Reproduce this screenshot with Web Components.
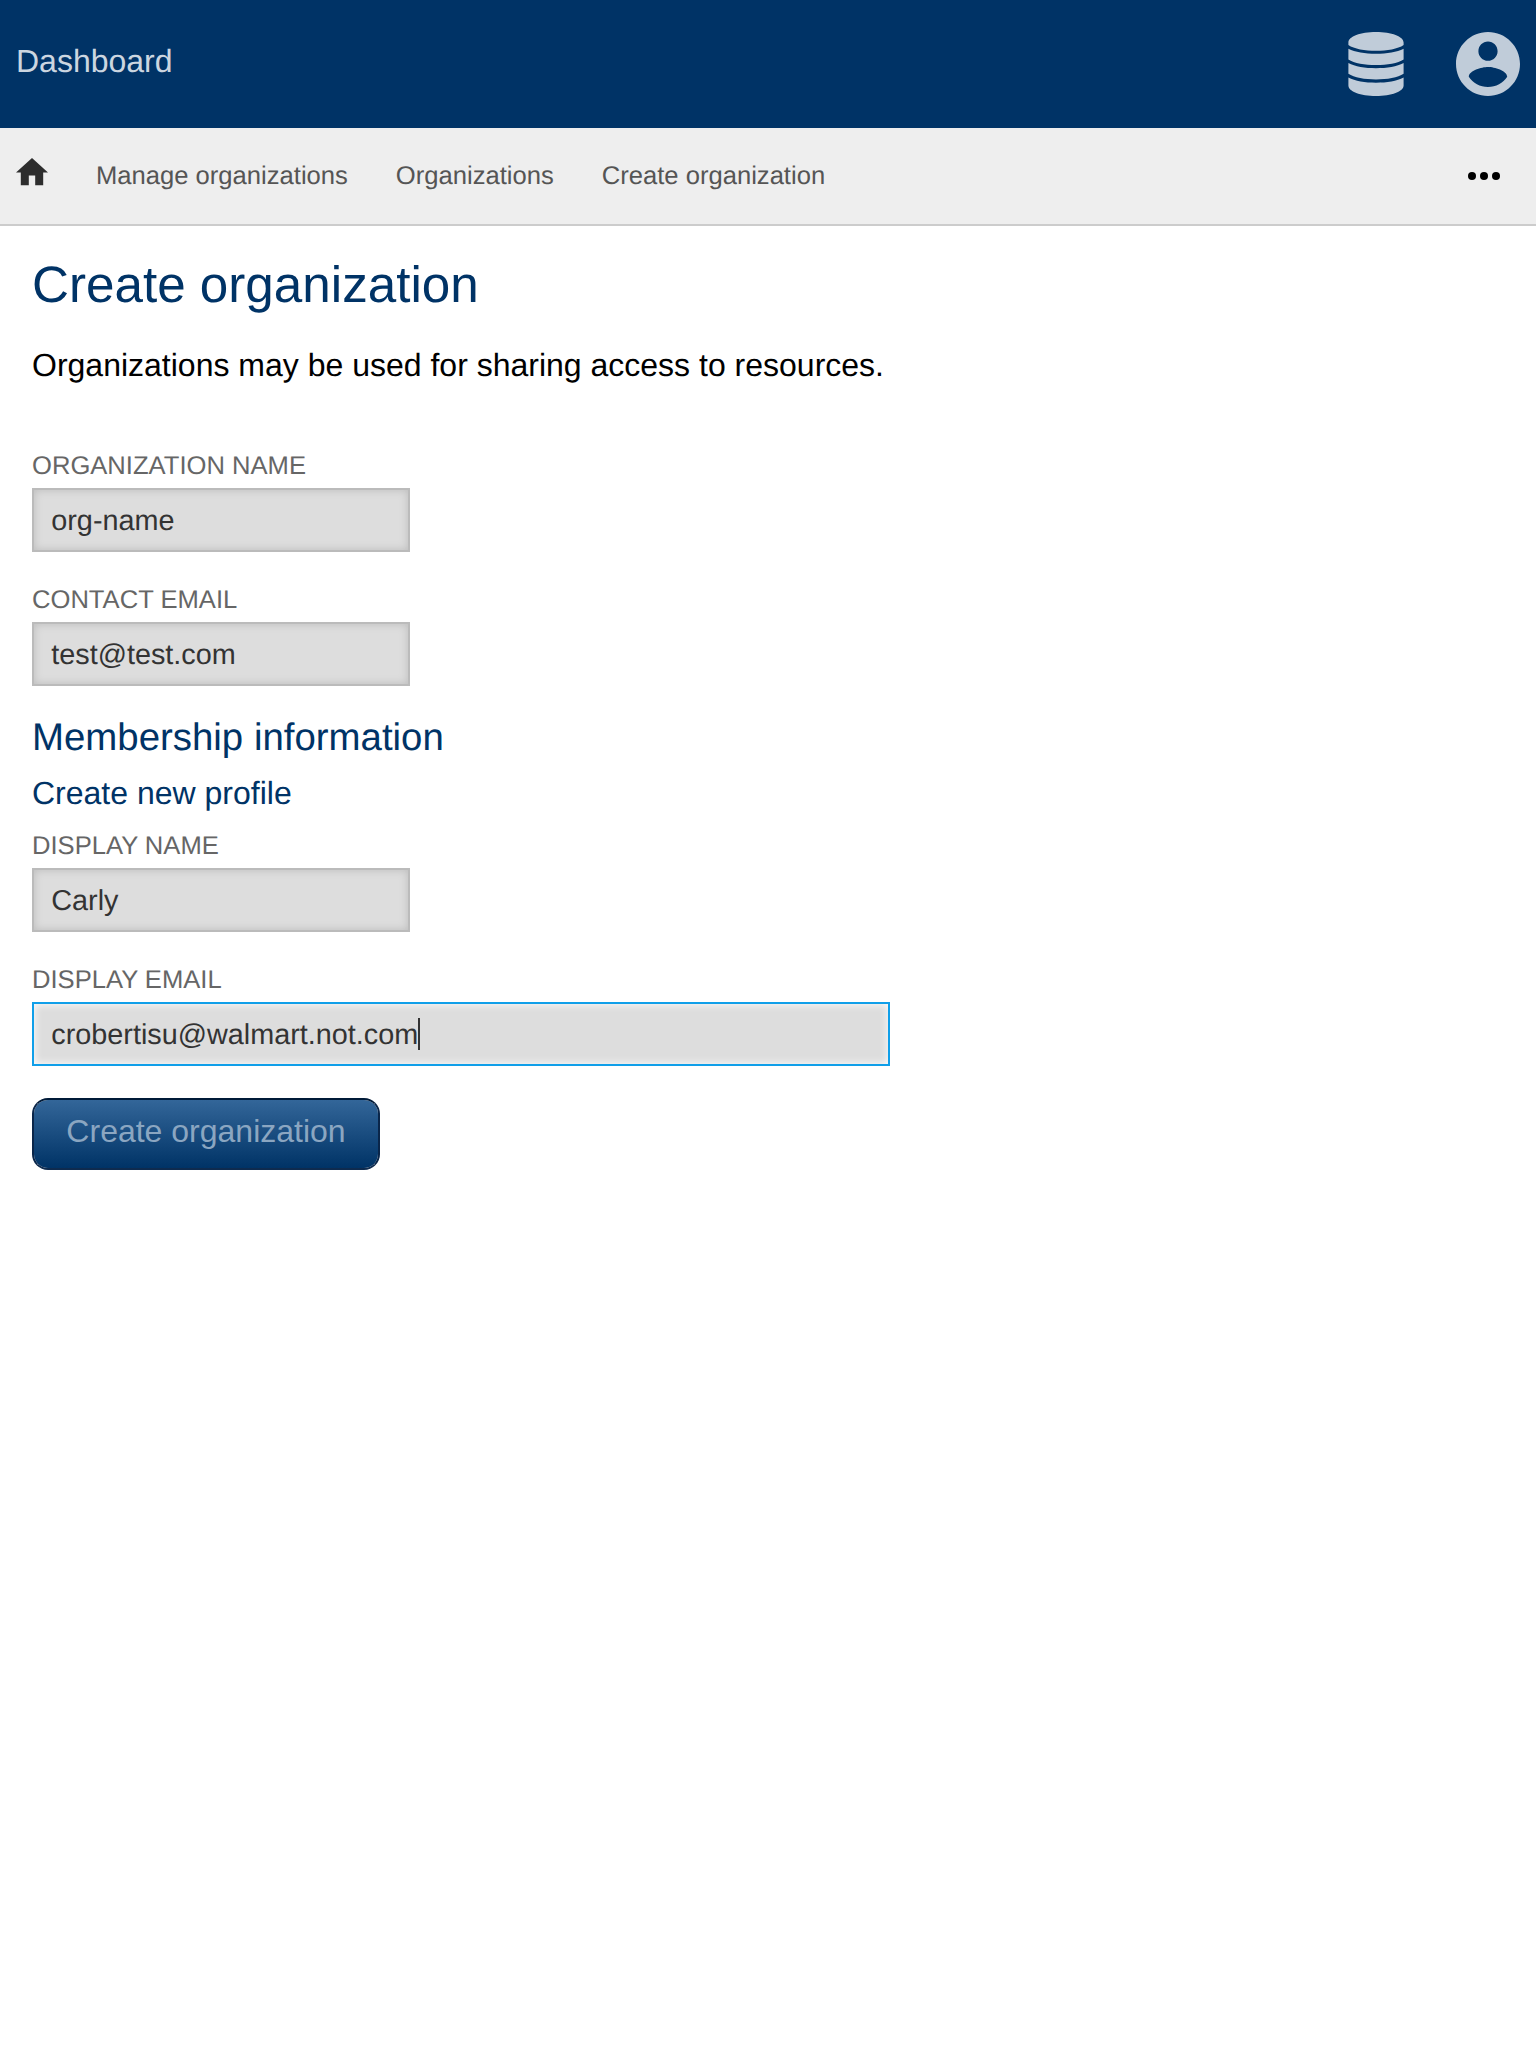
<!DOCTYPE html>
<html lang="en">
<head>
<meta charset="utf-8">
<title>Create organization</title>
<style>
html, body { margin: 0; background: #fff; }
body { font: 32px/36px "Liberation Sans", Arial, sans-serif; text-rendering: geometricPrecision; color: #000; }
</style>
</head>
<body>
<org-page></org-page>
<script>
const define = (name, html, setup) => {
  const template = document.createElement('template');
  template.innerHTML = html;
  customElements.define(name, class extends HTMLElement {
    constructor() {
      super();
      this.attachShadow({ mode: 'open' }).append(template.content.cloneNode(true));
    }
    connectedCallback() { if (setup) setup(this, this.shadowRoot); }
  });
};

define('top-bar', `
<style>
:host { display: flex; box-sizing: border-box; height: 128px; padding: 0 16px; background: #003366; align-items: center; justify-content: space-between; }
.title { color: #ccd6e0; padding-bottom: 6px; }
.icons { display: flex; gap: 52px; color: #c0ccd9; }
svg { display: block; fill: currentColor; }
</style>
<div class="title"><slot></slot></div>
<div class="icons">
<svg width="56" height="64" viewBox="0 0 56 64"><path d="M28 0C43.5 0 55.6 4.5 55.6 10.5V13C50 17 39 18.8 28 18.8S6 17 .4 13V10.5C.4 4.5 12.5 0 28 0ZM.4 16.8C7 20.3 17 21.8 28 21.8S49 20.3 55.6 16.8V27.5C50 31.3 39 33.1 28 33.1S6 31.3 .4 27.5ZM.4 31.1C7 34.7 17 36.3 28 36.3S49 34.7 55.6 31.1V41.8C50 45.7 39 47.5 28 47.5S6 45.7 .4 41.8ZM.4 45.5C7 49.1 17 50.7 28 50.7S49 49.1 55.6 45.5V53.5C55.6 59.5 43.5 64 28 64S.4 59.5 .4 53.5Z"/></svg>
<svg width="64" height="64" viewBox="2 2 20 20"><path d="M12 2C6.48 2 2 6.48 2 12s4.48 10 10 10 10-4.48 10-10S17.52 2 12 2zm0 3c1.66 0 3 1.34 3 3s-1.34 3-3 3-3-1.34-3-3 1.34-3 3-3zm0 14.2c-2.5 0-4.71-1.28-6-3.22.03-1.99 4-3.08 6-3.08 1.99 0 5.97 1.09 6 3.08-1.29 1.94-3.5 3.22-6 3.22z"/></svg>
</div>`);

define('crumb-bar', `
<style>
:host { display: flex; box-sizing: border-box; height: 98px; padding: 0 36px 0 16px; background: #eee; border-bottom: 2px solid #ccc; align-items: center; justify-content: space-between; font-size: 25.6px; line-height: 30px; color: #555; }
nav { display: flex; gap: 48px; align-items: center; }
svg { display: block; }
.home { fill: #2d2d2d; margin-bottom: 8px; }
</style>
<nav>
<svg class="home" width="32" height="27.2" viewBox="2 3 20 17"><path d="M10 20v-6h4v6h5v-8h3L12 3 2 12h3v8z"/></svg>
<slot></slot>
</nav>
<svg width="32" height="8" viewBox="0 0 32 8"><circle cx="4" cy="4" r="4"/><circle cx="16" cy="4" r="4"/><circle cx="28" cy="4" r="4"/></svg>`);

define('form-field', `
<style>
:host { display: flex; flex-direction: column; gap: 8px; width: 378px; }
label { padding-top: 1px; font-size: 25.6px; line-height: 28px; color: #666; text-transform: uppercase; }
.box { display: flex; align-items: center; box-sizing: border-box; height: 64px; padding: 0 17.28px; border: 2px solid #bbb; background: #ddd; box-shadow: inset 0 0 8px #bbb; font-size: 28.8px; line-height: 32px; color: #333; }
.box span { padding-top: 2px; }
:host([focused]) { width: 858px; }
:host([focused]) .box { border-color: #109fe9; box-shadow: inset 0 0 8px #fff; }
.caret { display: none; width: 2px; height: 32px; background: #333; }
:host([focused]) .caret { display: block; }
</style>
<label></label>
<div class="box"><span><slot></slot></span><i class="caret"></i></div>`,
(el, root) => { root.querySelector('label').textContent = el.getAttribute('label'); });

define('submit-button', `
<style>
:host { display: block; }
button { display: block; box-sizing: border-box; width: 348px; height: 72px; margin: 0; padding: 0 0 6px; border: 2px solid; border-color: #001a38 #0a264a #0e2b4f; border-radius: 16px; background: linear-gradient(#336699, #003366) padding-box; font: inherit; color: #8ba6c1; }
</style>
<button><slot></slot></button>`);

define('section-title', `
<style>
:host { display: block; color: #003366; }
:host([level="1"]) { padding-top: 1px; font-size: 51.2px; line-height: 60px; }
:host([level="2"]) { padding-top: 1px; font-size: 38.4px; line-height: 44px; }
:host([level="3"]) { font-size: 32px; line-height: 36px; }
</style>
<slot></slot>`);

define('org-page', `
<style>
:host { display: block; }
main { display: flex; flex-direction: column; align-items: flex-start; padding: 28px 32px; }
p { margin: 32px 0 68px; }
.fields { display: flex; flex-direction: column; gap: 33px; }
.membership { margin: 29px 0 15px; }
.profile { margin-bottom: 20px; }
submit-button { margin-top: 32px; }
</style>
<top-bar>Dashboard</top-bar>
<crumb-bar><span>Manage organizations</span><span>Organizations</span><span>Create organization</span></crumb-bar>
<main>
<section-title level="1">Create organization</section-title>
<p>Organizations may be used for sharing access to resources.</p>
<div class="fields">
<form-field label="Organization name">org-name</form-field>
<form-field label="Contact email">test@test.com</form-field>
</div>
<section-title class="membership" level="2">Membership information</section-title>
<section-title class="profile" level="3">Create new profile</section-title>
<div class="fields">
<form-field label="Display name">Carly</form-field>
<form-field label="Display email" focused>crobertisu@walmart.not.com</form-field>
</div>
<submit-button>Create organization</submit-button>
</main>`);
</script>
</body>
</html>
